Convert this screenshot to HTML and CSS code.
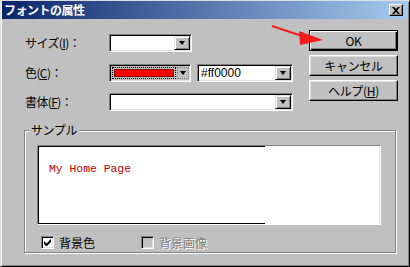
FILE: index.html
```html
<!DOCTYPE html>
<html lang="ja">
  <head>
    <meta charset="UTF-8" />
    <title>フォントの属性</title>
    <link rel="stylesheet" href="styles.css">
  </head>
  <body>
    <div class="window">
      <div class="titlebar">
        <span class="title">フォントの属性</span>
        <span class="close">
          <svg width="8" height="7" viewBox="0 0 8 7"><path d="M0 0h2l2 2 2-2h2L5 3.5 8 7H6L4 5 2 7H0l3-3.5z" fill="#000"/></svg>
        </span>
      </div>

      <div class="content">
        <div class="top">
          <div class="form">
            <div class="row first">
              <span class="label">サイズ(<u>I</u>)：</span>
              <div class="combo size"><span class="field"></span><span class="drop"></span></div>
            </div>
            <div class="row">
              <span class="label">色(<u>C</u>)：</span>
              <div class="combo color">
                <span class="focus"><span class="swatch"></span></span>
                <span class="drop flat"></span>
              </div>
              <div class="combo hex"><span class="field">#ff0000</span><span class="drop"></span></div>
            </div>
            <div class="row">
              <span class="label">書体(<u>F</u>)：</span>
              <div class="combo face"><span class="field"></span><span class="drop"></span></div>
            </div>
          </div>

          <div class="buttons">
            <button class="btn default">OK</button>
            <button class="btn">キャンセル</button>
            <button class="btn">ヘルプ(<u>H</u>)</button>
          </div>
        </div>

        <fieldset class="group">
          <legend>サンプル</legend>
          <div class="sample">
            <div class="view">My Home Page</div>
          </div>
          <div class="checks">
            <span class="check"><span class="box on">
              <svg width="7" height="7" viewBox="0 0 7 7"><path d="M0 2v3l2 2h1l4-4V0L2.5 4.5z" fill="#000"/></svg>
            </span>背景色</span>
            <span class="check off"><span class="box"></span>背景画像</span>
          </div>
        </fieldset>
      </div>

      <!-- pointer drawn over the dialog -->
      <svg class="arrow" width="410" height="60" viewBox="0 0 410 60">
        <line x1="272" y1="26" x2="305" y2="37" stroke="#f21d18" stroke-width="2" />
        <polygon points="299,31 323,40 300,45" fill="#f21d18" />
      </svg>
    </div>
  </body>
</html>
```

FILE: styles.css
```css
body {
  margin: 0;
  font-family: "Noto Sans CJK JP", sans-serif;
  font-size: 12px;
  color: #000;
}
u {
  text-decoration: underline;
  text-underline-offset: 1px;
}
.window {
  position: relative;
  width: 410px;
  height: 267px;
  box-sizing: border-box;
  background: #c0c0c0;
  border-top: 1px solid #dfdfdf;
  border-left: 1px solid #dfdfdf;
  border-right: 1px solid #000;
  border-bottom: 1px solid #000;
  box-shadow: inset 1px 1px #fff, inset -1px -1px #808080;
  display: flex;
  flex-direction: column;
  overflow: hidden;
}
.titlebar {
  height: 18px;
  margin: 0 1px;
  display: flex;
  align-items: center;
  justify-content: space-between;
  background: linear-gradient(to right, #0a246a, #a6caf0);
  padding: 0 5px 0 2px;
}
.title {
  color: #fff;
  font-weight: bold;
  line-height: 18px;
  letter-spacing: -0.5px;
}
.close {
  width: 14px;
  height: 12px;
  box-sizing: border-box;
  background: #c0c0c0;
  border-top: 1px solid #fff;
  border-left: 1px solid #fff;
  border-right: 1px solid #000;
  border-bottom: 1px solid #000;
  box-shadow: inset -1px -1px #808080;
  display: flex;
  align-items: center;
  justify-content: center;
}
.content {
  padding: 11px 11px 0 23px;
}
.top {
  display: flex;
  justify-content: space-between;
}
.form {
  padding-top: 4px;
  margin-left: 1px;
  display: flex;
  flex-direction: column;
  gap: 11px;
}
.row {
  display: flex;
  align-items: center;
  height: 18px;
}
.row.first {
  margin-bottom: 1px;
}
.label {
  width: 84px;
  line-height: 18px;
  letter-spacing: -0.6px;
}
.combo {
  height: 18px;
  box-sizing: border-box;
  background: #fff;
  border-top: 1px solid #808080;
  border-left: 1px solid #808080;
  border-right: 1px solid #fff;
  border-bottom: 1px solid #fff;
  box-shadow: inset 1px 1px #000, inset -1px -1px #dfdfdf;
  display: flex;
  padding: 1px;
}
.combo .field {
  flex: 1;
  padding-left: 2px;
  font-family: "Liberation Sans", sans-serif;
  font-size: 12px;
  line-height: 14px;
}
.drop {
  width: 16px;
  box-sizing: border-box;
  background: #c0c0c0;
  border-top: 1px solid #dfdfdf;
  border-left: 1px solid #dfdfdf;
  border-right: 1px solid #000;
  border-bottom: 1px solid #000;
  box-shadow: inset 1px 1px #fff, inset -1px -1px #808080;
  display: flex;
  align-items: center;
  justify-content: center;
}
.drop::after {
  content: "";
  border-top: 4px solid #000;
  border-left: 3.5px solid transparent;
  border-right: 3.5px solid transparent;
}
.size {
  width: 83px;
}
.color {
  width: 82px;
  background: #c0c0c0;
  padding: 2px 1px 2px 2px;
  gap: 1px;
}
.color .focus {
  flex: 1;
  border: 1px dotted #000;
  padding: 1px;
  display: flex;
}
.color .swatch {
  flex: 1;
  background: #ff0000;
  border: 1px solid #800000;
}
.drop.flat {
  width: 12px;
  border: 1px dotted #808080;
  box-shadow: none;
}
.hex {
  width: 96px;
  margin-left: 6px;
}
.face {
  width: 184px;
}
.buttons {
  display: flex;
  flex-direction: column;
  gap: 4px;
}
.btn {
  width: 89px;
  height: 21px;
  box-sizing: border-box;
  background: #c0c0c0;
  font-family: "Noto Sans CJK JP", sans-serif;
  font-size: 12px;
  line-height: 15px;
  padding: 0;
  color: #000;
  border-top: 1px solid #fff;
  border-left: 1px solid #fff;
  border-right: 1px solid #000;
  border-bottom: 1px solid #000;
  box-shadow: inset -1px -1px #808080, inset 1px 1px #dfdfdf;
  letter-spacing: -0.3px;
}
.btn.default {
  border: 1px solid #000;
  box-shadow: inset 1px 1px #fff, inset -1px -1px #000, inset -2px -2px #808080;
}
.group {
  margin: 12px 0 0 0;
  width: 372px;
  box-sizing: border-box;
  border: 1px solid #808080;
  box-shadow: inset 1px 1px #fff, 1px 1px #fff;
  padding: 8px 14px 2px 12px;
}
.group legend {
  margin-left: -8px;
  padding: 0 2px;
  line-height: 14px;
  background: #c0c0c0;
  letter-spacing: -0.4px;
}
.sample {
  height: 80px;
  box-sizing: border-box;
  border-top: 1px solid #808080;
  border-left: 1px solid #808080;
  border-right: 1px solid #fff;
  border-bottom: 1px solid #fff;
}
.view {
  height: 100%;
  box-sizing: border-box;
  border-left: 1px solid #000;
  border-right: 1px solid #dfdfdf;
  background:
    linear-gradient(#000, #000) left top / 226px 1px no-repeat,
    linear-gradient(#000, #000) left bottom / 226px 1px no-repeat,
    #fff;
  padding: 16px 0 0 10px;
  color: #c00000;
  font-family: "Liberation Mono", monospace;
  font-size: 11.4px;
  line-height: 14px;
}
.checks {
  display: flex;
  align-items: center;
  height: 16px;
  margin-top: 9px;
  padding-left: 4px;
}
.check {
  display: flex;
  align-items: center;
  gap: 5px;
  width: 100px;
}
.box {
  width: 13px;
  height: 13px;
  box-sizing: border-box;
  background: #fff;
  border-top: 1px solid #808080;
  border-left: 1px solid #808080;
  border-right: 1px solid #fff;
  border-bottom: 1px solid #fff;
  box-shadow: inset 1px 1px #000, inset -1px -1px #dfdfdf;
  display: flex;
  align-items: center;
  justify-content: center;
}
.check.off {
  color: #808080;
  text-shadow: 1px 1px #fff;
}
.check.off .box {
  background: #c0c0c0;
}
.arrow {
  position: absolute;
  left: -1px;
  top: -1px;
  pointer-events: none;
}
```
